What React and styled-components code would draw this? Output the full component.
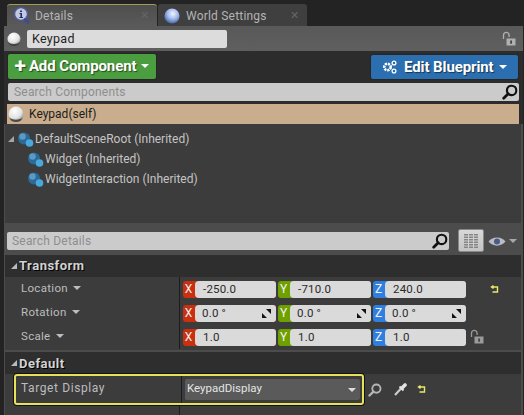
import React from "react";
import styled, { createGlobalStyle } from "styled-components";

const Global = createGlobalStyle`
  html, body { margin: 0; padding: 0; background: #232323; }
  body { width: 524px; height: 415px; overflow: hidden; font-family: Roboto, "Liberation Sans", sans-serif; }
  * { box-sizing: border-box; }
`;

const Page = styled.div`
  width: 524px; height: 415px; display: flex; flex-direction: column; background: #232323; overflow: hidden;
`;
const TabStrip = styled.div`
  height: 26px; padding: 4px 0 0 7px; display: flex; gap: 1px; flex: none;
`;
const Tab = styled.div`
  width: ${p => p.$w}px; height: 22px; display: flex; align-items: center;
  background: ${p => p.$active ? "linear-gradient(#4e4e4e,#5a5a5a)" : "#3f3f3f"};
  border-top: 1px solid ${p => p.$active ? "#a39a55" : "#3f3f3f"};
  border-radius: 3px 3px 0 0; padding-left: 6px;
  color: #b4b4b4; font-size: 12px; letter-spacing: .2px;
`;
const TabLabel = styled.span` margin-left: ${p => p.$ml}px; flex: 1; `;
const TabClose = styled.span` color: #666; font-size: 11px; margin-right: 8px; `;
const Panel = styled.div`
  flex: 1; margin: 0 1px 0 4px; display: flex; flex-direction: column; background: #4c4c4c; min-height: 0;
`;
const NameBar = styled.div`
  height: 25px; flex: none; display: flex; align-items: center; background: linear-gradient(#595959,#5f5f5f);
  padding-left: 3px;
`;
const NameField = styled.div`
  width: 200px; height: 18px; margin-left: 6px; background: #dcdcdc; border-radius: 2px; color: #1e1e1e;
  font-size: 12.5px; line-height: 18px; padding-left: 5px; letter-spacing: .3px;
`;
const NameLock = styled.div` margin-left: auto; margin-right: 7px; height: 16px; `;
const ToolBar = styled.div`
  height: 31px; flex: none; background: #2c2c2c; padding: 3px 5px 0 4px; display: flex; justify-content: space-between;
`;
const ActionButton = styled.div`
  width: ${p => p.$w}px; height: ${p => p.$h}px; margin-top: ${p => p.$mt}px; background: ${p => p.$bg}; border-radius: 2px;
  display: flex; align-items: center; justify-content: center; gap: 3px; padding-bottom: 1px;
  color: #fff; font-weight: 700; font-size: 15px; letter-spacing: -.1px; text-shadow: 1px 1px 1px #0008;
  box-shadow: 0 0 0 1px #2228;
`;
const Plus = styled.span` font-size: 21px; line-height: 1; font-weight: 700; margin-top: 0; `;
const Caret = styled.span`
  width: 0; height: 0; margin-left: ${p => p.$ml ?? 2}px;
  border-left: ${p => p.$s ?? 4}px solid transparent; border-right: ${p => p.$s ?? 4}px solid transparent;
  border-top: ${p => p.$s ?? 4}px solid ${p => p.$c ?? "#fff"};
`;
const SearchRow = styled.div`
  flex: none; background: #2c2c2c; padding: 1px 0 0 4px; display: flex; align-items: center;
`;
const SearchBox = styled.div`
  width: ${p => p.$w}px; height: 18px; background: #cbcbcb; border-radius: 2px; display: flex; align-items: center;
  justify-content: space-between; padding: 0 1px 0 ${p => p.$pl}px; color: #8e8e8e; font-size: 12px; letter-spacing: .2px; flex: none;
`;
const SelfWrap = styled.div` flex: none; height: 23px; background: #2c2c2c; padding-top: 3px; `;
const SelfRow = styled.div`
  height: 20px; margin: 0 4px 0 3px; background: #c9ad8d; display: flex; align-items: center;
  padding-left: 1px; gap: 5px; color: #1c1c1c; font-size: 12px;
`;
const Tree = styled.div`
  flex: none; height: 99px; background: #3c3c3c; padding-top: 5px; margin: 0 2px 0 1px;
`;
const TreeRow = styled.div`
  height: 20px; display: flex; align-items: center; color: #c4c4c4; font-size: 12px; padding-left: ${p => p.$pl}px;
`;
const Disclosure = styled.span`
  width: 0; height: 0; border-style: solid; border-width: 0 0 6px 6px; border-color: transparent transparent ${p => p.$c ?? "#a5a5a5"} transparent;
  margin-right: ${p => p.$mr}px; flex: none;
`;
const DetailsBar = styled.div`
  flex: none; height: 32px; padding: 9px 0 0 3px; display: flex; gap: 9px;
`;
const ViewToggle = styled.div`
  width: 26px; height: 23px; margin-top: -3px; background: linear-gradient(#d8d8d8,#c4c4c4); border: 1px solid #888; border-radius: 2px;
  display: flex; align-items: center; justify-content: center;
`;
const EyeWrap = styled.div` display: flex; align-items: center; gap: 3px; height: 18px; margin-left: -5px; `;
const Section = styled.div`
  flex: none; margin: 0 2px 0 1px;
`;
const SectionHead = styled.div`
  height: 22px; padding: 0 0 ${p => p.$pb}px 6px; display: flex; align-items: center; gap: 2px;
  background: #2e2e2e; color: #d2d2d2; font-weight: 700; font-size: 13px; letter-spacing: .5px; text-shadow: 1px 1px 0 #000;
`;
const Grid = styled.div`
  background: #3c3c3c; padding-bottom: 1px; margin-bottom: 2px;
`;
const PropRow = styled.div`
  height: 24px; display: flex; align-items: center;
`;
const PropName = styled.div`
  width: 175px; height: 24px; padding: 0 0 3px 16px; display: flex; align-items: center; gap: 5px;
  color: #bdbdbd; font-size: 11.5px; letter-spacing: .3px; border-right: 1px solid #1c1c1c; flex: none;
`;
const PropCaret = styled(Caret)` margin-left: 0; `;
const Fields = styled.div` display: flex; gap: 2px; padding-left: 3px; `;
const AxisField = styled.div`
  width: 93px; height: 17px; background: ${p => p.$c}; border-radius: 3px; display: flex; align-items: center; overflow: hidden;
  position: relative;
`;
const AxisLabel = styled.span`
  width: 11px; color: #f2f2f2; text-align: center; font-size: 12px; line-height: 17px; flex: none;
`;
const AxisValue = styled.span`
  flex: 1; height: 17px; background: #dadada; border-radius: 4px 0 0 4px; padding-left: ${p => p.$pl}px; margin-left: 1px;
  color: #2a2a2a; font-size: 11.5px; line-height: 17px; letter-spacing: .2px;
`;
const Spin = styled.svg` position: absolute; right: 5px; top: 4px; `;
const ResetWrap = styled.div` margin-left: ${p => p.$ml}px; display: flex; `;
const DefaultArea = styled.div`
  flex: 1; background: #3c3c3c; padding-left: 9px; min-height: 0; margin: 0 2px 0 1px;
`;
const Highlight = styled.div`
  display: flex; align-items: center; gap: 4px;
`;
const HighlightBox = styled.div`
  width: 350px; height: 31px; flex: none; border: 2px solid #e6e05a; border-radius: 3px; display: flex; align-items: center;
  box-shadow: 0 0 0 1px #111; background: #3c3c3c;
`;
const TargetName = styled.div`
  width: 166px; padding: 0 0 3px 5px; height: 27px; display: flex; align-items: center; color: #bdbdbd; font-size: 12px; letter-spacing: .6px; border-right: 1px solid #1c1c1c; flex: none;
`;
const Combo = styled.div`
  width: 175px; height: 21px; margin-left: 3px; background: #5a5a5a; border-radius: 2px; display: flex; align-items: center; justify-content: space-between;
  padding: 0 4px 3px 2px; color: #e4e4e4; font-size: 11.5px;
`;
const ComboCaret = styled(Caret)` margin-top: 3px; `;
const RowIcons = styled.div` display: flex; align-items: center; gap: 12px; margin-right: 6px; `;
const TailLine = styled.div` width: 1px; height: 10px; background: #1c1c1c; margin-left: 165px; `;

const Sphere = ({ size = 14 }) => (
  <svg width={size} height={size} viewBox="0 0 14 14">
    <defs>
      <radialGradient id="sph" cx=".4" cy=".3" r=".8">
        <stop offset="0" stopColor="#fff" /><stop offset=".6" stopColor="#e2e2e2" /><stop offset="1" stopColor="#777" />
      </radialGradient>
    </defs>
    <circle cx="7" cy="7" r="6.5" fill="url(#sph)" />
    <path d="M1 10a6.5 6.5 0 0 0 12 0a7 4 0 0 1 -12 0z" fill="#222" opacity=".7" />
  </svg>
);
const Globe = () => (
  <svg width="16" height="16" viewBox="0 0 16 16">
    <defs>
      <radialGradient id="glb" cx=".55" cy=".35" r=".75">
        <stop offset="0" stopColor="#f2f5fd" /><stop offset=".45" stopColor="#a3bceb" /><stop offset="1" stopColor="#2c4a98" />
      </radialGradient>
    </defs>
    <circle cx="8" cy="8" r="7.6" fill="url(#glb)" />
  </svg>
);
const InfoIcon = () => (
  <svg width="18" height="18" viewBox="0 0 18 18">
    <circle cx="8" cy="7" r="6.5" fill="#c4c8dc" stroke="#4a5a9c" strokeWidth="1.4" />
    <path d="M7 3.5h2v1.6H7zM6.4 6h2.6v4h1v1H6.4v-1h1V7h-1z" fill="#22306a" />
    <path d="M11 12l5 4" stroke="#3a4a9c" strokeWidth="2.4" />
  </svg>
);
const Nodes = () => (
  <svg width="19" height="17" viewBox="0 0 19 17" style={{ flex: "none" }}>
    <circle cx="8" cy="7.5" r="6" fill="#2c6b98" />
    <circle cx="6.5" cy="5.5" r="3.2" fill="#5b9ac4" />
    <circle cx="13.5" cy="12" r="3.8" fill="#48a9dc" />
  </svg>
);
const Magnifier = ({ c = "#111", w = 16 }) => (
  <svg width={w} height={w} viewBox="0 0 15 15">
    <circle cx="9" cy="6" r="4.4" fill="none" stroke={c} strokeWidth="2" />
    <path d="M5.8 9.2L1.6 13.4" stroke={c} strokeWidth="2.6" strokeLinecap="round" />
  </svg>
);
const Lock = ({ c = "#b0b0b0" }) => (
  <svg width="14" height="16" viewBox="0 0 14 16">
    <path d="M1.5 8V4.2a2.8 2.8 0 0 1 5.6 0V6" fill="none" stroke={c} strokeWidth="1.3" />
    <rect x="4.5" y="7.5" width="9" height="7" fill={c} />
    <rect x="8.2" y="9.5" width="1.8" height="3.2" fill="#444" />
  </svg>
);
const Gears = () => (
  <svg width="15" height="14" viewBox="0 0 15 14">
    <circle cx="5.5" cy="7" r="3.2" fill="none" stroke="#fff" strokeWidth="2.6" strokeDasharray="2.2 .8" />
    <circle cx="12" cy="3" r="1.9" fill="none" stroke="#fff" strokeWidth="1.3" />
    <circle cx="12" cy="11" r="1.9" fill="none" stroke="#fff" strokeWidth="1.3" />
  </svg>
);
const Reset = () => (
  <svg width="9" height="9" viewBox="0 0 9 9">
    <path d="M2 2h5.5v5H2.5M3.5 .7L1.5 2l2 1.5" fill="none" stroke="#e8e86a" strokeWidth="1.4" />
  </svg>
);
const GridIcon = () => (
  <svg width="14" height="14" viewBox="0 0 14 14">
    {[0, 2.5, 5, 7.5, 10, 12.5].map(y => <rect key={y} x="0" y={y} width="14" height="1.5" fill="#858585" />)}
    <rect x="4" y="0" width="1" height="14" fill="#cfcfcf" />
    <rect x="9" y="0" width="1" height="14" fill="#cfcfcf" />
  </svg>
);
const Eye = () => (
  <svg width="18" height="11" viewBox="0 0 17 11">
    <path d="M0 5.5C4 0 13 0 17 5.5C13 11 4 11 0 5.5z" fill="#b9bcc4" />
    <circle cx="8.5" cy="5.5" r="3" fill="#4c5a88" />
  </svg>
);
const Dropper = () => (
  <svg width="13" height="13" viewBox="0 0 13 13">
    <path d="M1 12L7 5.5" stroke="#ccc" strokeWidth="2.2" />
    <path d="M5.5 3.5l4 4" stroke="#e4e4e4" strokeWidth="2" />
    <path d="M8 5L11 2" stroke="#e4e4e4" strokeWidth="3.6" strokeLinecap="round" />
  </svg>
);
const SpinIcon = () => (
  <Spin width="9" height="9" viewBox="0 0 9 9">
    <path d="M4 0h5v5zM0 4l5 5H0z" fill="#111" />
  </Spin>
);

const Vector = ({ values, spin, pl }) => (
  <Fields>
    {[["X", "#c8300f"], ["Y", "#6ea000"], ["Z", "#2f7fe0"]].map(([a, c], i) => (
      <AxisField key={a} $c={c}>
        <AxisLabel>{a}</AxisLabel>
        <AxisValue $pl={pl}>{values[i]}</AxisValue>
        {spin && <SpinIcon />}
      </AxisField>
    ))}
  </Fields>
);

export default function App() {
  return (
    <Page>
      <Global />
      <TabStrip>
        <Tab $w={150} $active><InfoIcon /><TabLabel $ml={4}>Details</TabLabel><TabClose>✕</TabClose></Tab>
        <Tab $w={149}><Globe /><TabLabel $ml={6}>World Settings</TabLabel><TabClose>✕</TabClose></Tab>
      </TabStrip>
      <Panel>
        <NameBar>
          <Sphere />
          <NameField>Keypad</NameField>
          <NameLock><Lock /></NameLock>
        </NameBar>
        <ToolBar>
          <ActionButton $w={148} $h={25} $mt={0} $bg="#4a9e40"><Plus>+</Plus>Add Component<Caret /></ActionButton>
          <ActionButton $w={147} $h={24} $mt={1} $bg="#2b6fb0"><Gears />&nbsp;Edit Blueprint<Caret /></ActionButton>
        </ToolBar>
        <SearchRow>
          <SearchBox $w={511} $pl={6}>Search Components<Magnifier /></SearchBox>
        </SearchRow>
        <SelfWrap>
          <SelfRow><Sphere size={16} />Keypad(self)</SelfRow>
        </SelfWrap>
        <Tree>
          <TreeRow $pl={3}><Disclosure $mr={2} /><Nodes />DefaultSceneRoot (Inherited)</TreeRow>
          <TreeRow $pl={21}><Nodes />Widget (Inherited)</TreeRow>
          <TreeRow $pl={21}><Nodes />WidgetInteraction (Inherited)</TreeRow>
        </Tree>
        <DetailsBar>
          <SearchBox $w={442} $pl={5}>Search Details<Magnifier /></SearchBox>
          <ViewToggle><GridIcon /></ViewToggle>
          <EyeWrap><Eye /><Caret $c="#a8a8a8" $ml={0} /></EyeWrap>
        </DetailsBar>
        <Section>
          <SectionHead $pb={1}><Disclosure $mr={0} $c="#bbb" />Transform</SectionHead>
          <Grid>
            <PropRow>
              <PropName>Location <PropCaret $c="#bdbdbd" /></PropName>
              <Vector values={["-250.0", "-710.0", "240.0"]} pl={8} />
              <ResetWrap $ml={24}><Reset /></ResetWrap>
            </PropRow>
            <PropRow>
              <PropName>Rotation <PropCaret $c="#bdbdbd" /></PropName>
              <Vector values={["0.0 °", "0.0 °", "0.0 °"]} spin pl={7} />
            </PropRow>
            <PropRow>
              <PropName>Scale <PropCaret $c="#bdbdbd" /></PropName>
              <Vector values={["1.0", "1.0", "1.0"]} pl={8} />
              <ResetWrap $ml={4}><Lock c="#9a9a9a" /></ResetWrap>
            </PropRow>
          </Grid>
          <SectionHead $pb={0}><Disclosure $mr={0} $c="#bbb" />Default</SectionHead>
        </Section>
        <DefaultArea>
          <Highlight>
            <HighlightBox>
              <TargetName>Target Display</TargetName>
              <Combo>KeypadDisplay<ComboCaret $c="#ddd" /></Combo>
            </HighlightBox>
            <RowIcons>
              <Magnifier c="#b5b5b5" w={14} />
              <Dropper />
            </RowIcons>
            <Reset />
          </Highlight>
          <TailLine />
        </DefaultArea>
      </Panel>
    </Page>
  );
}
